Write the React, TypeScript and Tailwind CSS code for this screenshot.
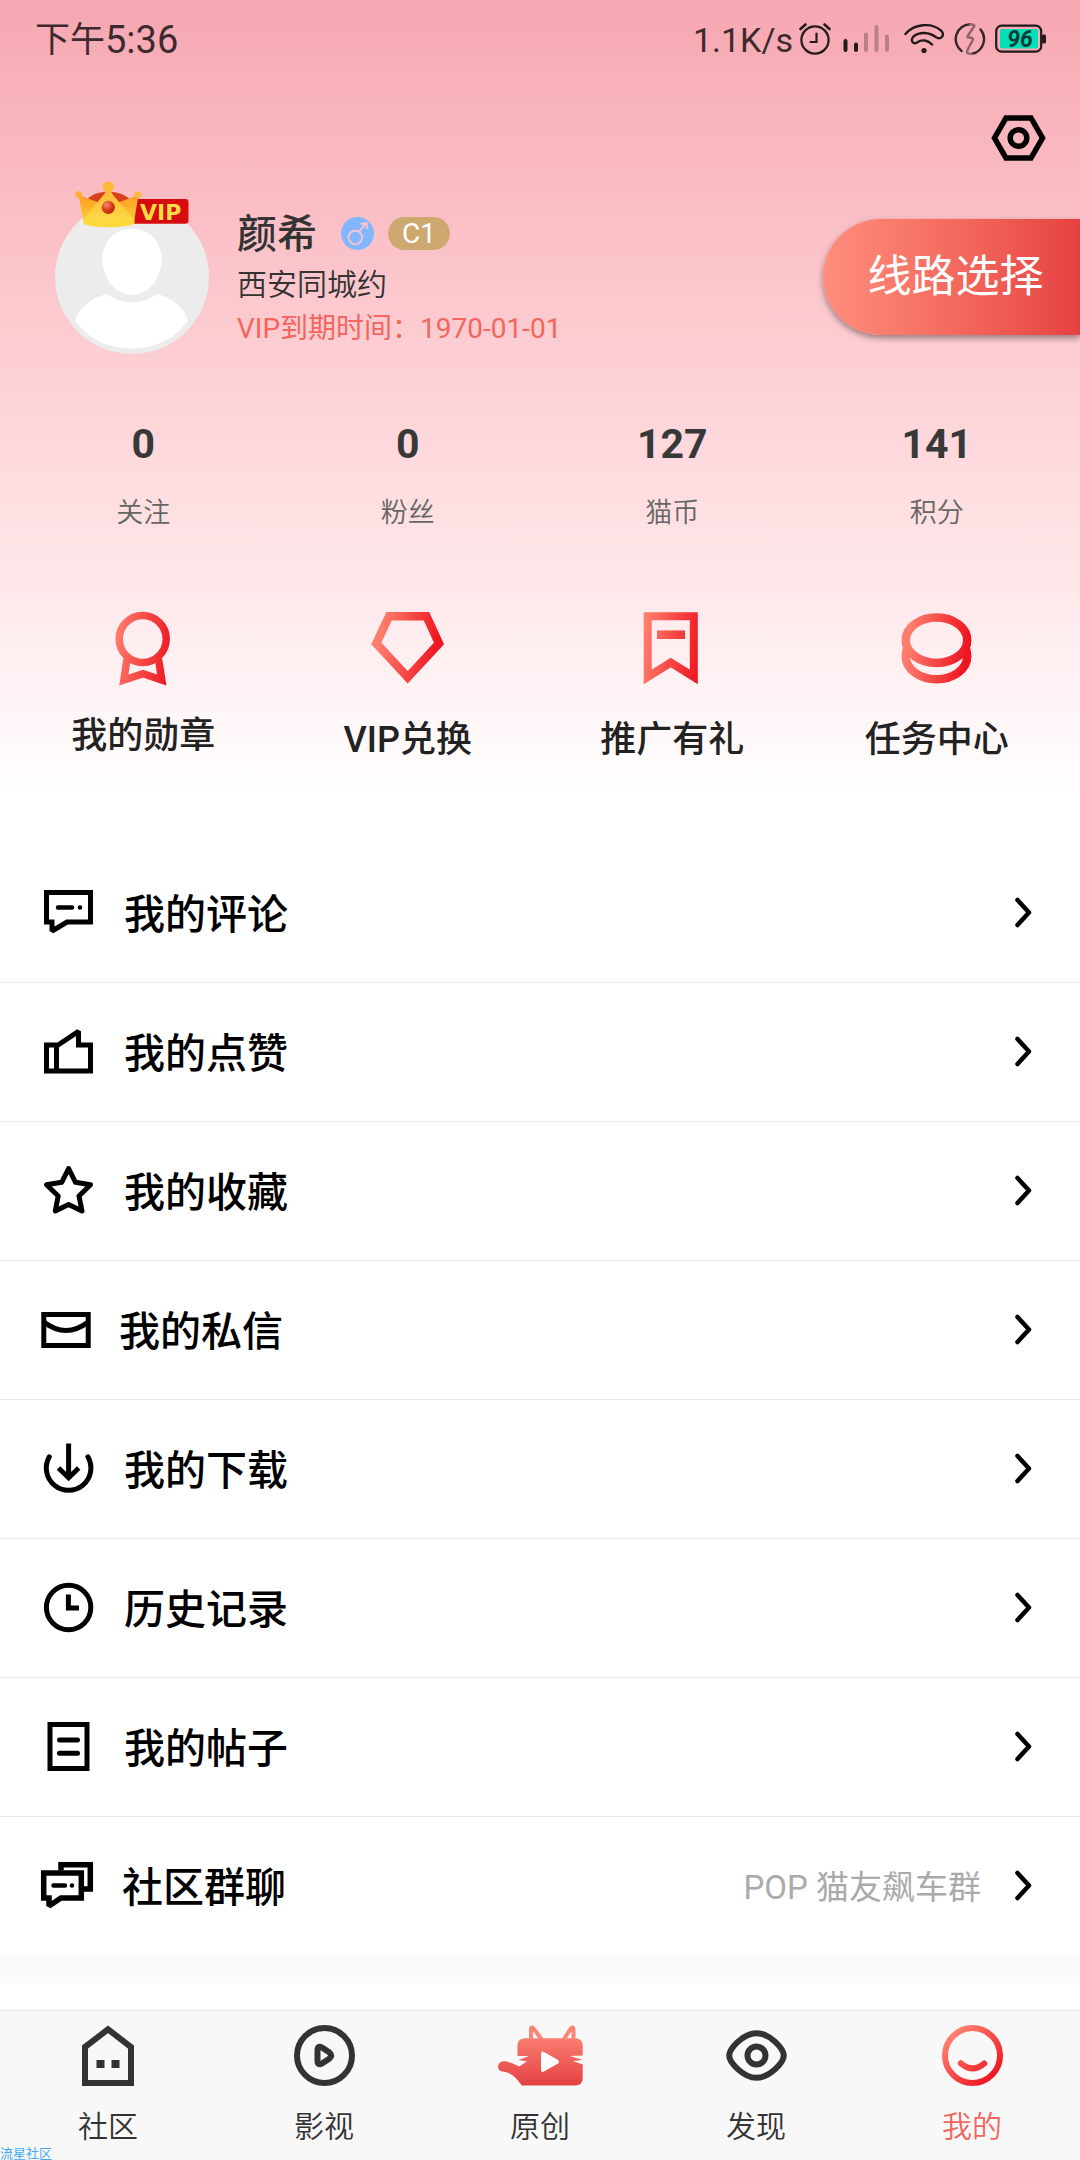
import type { ReactNode } from 'react';

type Row = { label: string; icon: ReactNode; note?: string };

function RedGradient({ id }: { id: string }) {
  return (
    <defs>
      <linearGradient id={id} gradientUnits="userSpaceOnUse" x1="8" y1="30" x2="66" y2="38">
        <stop offset="0" stopColor="#ff7d6d" />
        <stop offset="1" stopColor="#ee1721" />
      </linearGradient>
    </defs>
  );
}

function StatusBar() {
  return (
    <div className="flex h-[77px] items-start justify-between pt-[14px] pr-[33px] pl-[35px] leading-[50px] text-[#3d2a2e]">
      <div className="flex items-center text-[38px] leading-[50px]">
        <span className="pt-[2px] text-[35px]">下午</span>
        <span>5:36</span>
      </div>
      <div className="flex h-[50px] items-center text-[34px]">
        <span className="mr-[6px] pt-[2px] leading-[50px]">1.1K/s</span>
        <svg className="mr-[12px] h-[32px] w-[32px]" viewBox="0 0 32 32" fill="none" stroke="#231a1c" strokeWidth="2.2" strokeLinecap="round">
          <circle cx="16" cy="17" r="13.6" />
          <path d="M17.5 10.500V19H11.500" />
          <path d="M1.500 6L6.500 1.500M25.500 1.500L30.500 6" strokeWidth="2.600" />
        </svg>
        <svg className="mr-[15px] h-[32px] w-[46px]" viewBox="0 0 46 32" fill="none" strokeWidth="4" strokeLinecap="round">
          <path d="M2.500 18V27M13 21.500V27" stroke="#231a1c" />
          <path d="M23 11.500V27M33.500 4V27M44 13.500V27" stroke="#b98086" />
        </svg>
        <svg className="mr-[10px] h-[32px] w-[40px]" viewBox="0 0 40 32" fill="none" stroke="#231a1c" strokeWidth="2.400" strokeLinecap="round">
          <path d="M1.500 11C10 1 27 -1 37 7.500C41 11.500 38 17 32.500 14.500C25 9 16 8.500 9.500 13.500C6 17.500 9 22 13 19.500C18 16 24 17 28 21.500" />
          <circle cx="20" cy="27.500" r="2.600" fill="#231a1c" stroke="none" />
        </svg>
        <svg className="mr-[9px] h-[32px] w-[32px]" viewBox="0 0 32 32" fill="none" strokeWidth="2.400" strokeLinecap="round">
          <path d="M26.500 6.500A15 15 0 0 1 18 30.800M7.500 28A15 15 0 0 1 16 1.200" stroke="#33272a" />
          <path d="M16 1.200C19 1.200 21 2 20 3.500L14 12.500C13 14 13.500 14.500 15 14.500C19 14.500 19.500 15.500 18.500 17.500L14 26C12 30 13 31 18 30.800" stroke="#8f6369" />
        </svg>
        <svg className="h-[32px] w-[52px]" viewBox="0 0 52 32" aria-label="96">
          <rect x="1.200" y="2.700" width="45" height="26" rx="5.500" fill="none" stroke="#231a1c" strokeWidth="2.200" />
          <rect x="5" y="6" width="38" height="19.500" rx="2" fill="#00e0b8" />
          <rect x="47" y="11.500" width="4" height="9" rx="1.500" fill="#231a1c" />
          <text x="25" y="24" textAnchor="middle" fontSize="23" fontWeight="700" fontStyle="italic" fill="#0d3b34">96</text>
        </svg>
      </div>
    </div>
  );
}

function Avatar() {
  return (
    <div className="relative ml-[55px] h-[154px] w-[154px] shrink-0">
      <svg className="h-full w-full" viewBox="0 0 154 154">
        <circle cx="77" cy="77" r="77" fill="#ececec" />
        <path d="M77 29C95 29 106.500 41 106.500 59C106.500 80 93 94.700 77 94.700S47.500 80 47.500 59C47.500 41 59 29 77 29Z" fill="#fff" />
        <path d="M52 94Q77 111 102 94C118 98 131 110 133 121Q112 148.500 76.500 148.500Q41 148.500 20 121C22 110 36 98 52 94Z" fill="#fff" />
      </svg>
      <svg className="absolute -top-[19px] left-[19px] h-[47px] w-[116px]" viewBox="0 0 116 47">
        <defs>
          <linearGradient id="gold" x1="0" y1="0" x2="0" y2="1">
            <stop offset="0" stopColor="#fdb834" />
            <stop offset="1" stopColor="#ffe04a" />
          </linearGradient>
          <linearGradient id="amber" x1="0" y1="0" x2="0" y2="1">
            <stop offset="0" stopColor="#ff9d20" />
            <stop offset="1" stopColor="#ffcb38" />
          </linearGradient>
          <radialGradient id="gem" cx="0.35" cy="0.3" r="0.75">
            <stop offset="0" stopColor="#f58a66" />
            <stop offset="0.6" stopColor="#d93a1c" />
            <stop offset="1" stopColor="#c22610" />
          </radialGradient>
        </defs>
        <rect x="50" y="18" width="64.500" height="24.800" rx="3" fill="#d70c10" />
        <text x="66" y="38.500" fontSize="22" fontWeight="700" fontFamily="DejaVu Sans" fill="#fddb45">VIP</text>
        <path d="M13 19C20 8 48 8 56 19L50 30H18Z" fill="#d9401f" />
        <path d="M4.500 14L26 22L12 41L9 38Z" fill="url(#amber)" />
        <path d="M64.500 14L43 22L57 41L60.500 38Z" fill="url(#amber)" />
        <path d="M34.300 8Q37 10 39 14L58 36L60.500 42C56 47.500 14 47.500 9.500 42L11 36L29.500 14Q32 10 34.300 8Z" fill="url(#gold)" />
        <path d="M9 37C18 42.500 51 42.500 60.500 37L60.500 42C56 47.500 14 47.500 9.500 42Z" fill="#ffd83c" />
        <circle cx="34.300" cy="6" r="5.600" fill="#fdb835" />
        <circle cx="4.700" cy="13.500" r="3.300" fill="#fdb02c" />
        <circle cx="64" cy="13.500" r="3.300" fill="#fdb835" />
        <circle cx="34.300" cy="26.300" r="6.600" fill="url(#gem)" />
      </svg>
    </div>
  );
}

function Profile() {
  return (
    <section className="mt-[39px] flex items-center">
      <Avatar />
      <div className="ml-[28px] flex min-w-0 flex-1 flex-col pt-[2px]">
        <div className="flex h-[50px] items-center">
          <h1 className="pt-[4px] text-[40px] leading-[50px] font-medium text-[#333]">颜希</h1>
          <svg className="ml-[24px] h-[33px] w-[33px]" viewBox="0 0 33 33" fill="none" stroke="#f3c3d2" strokeWidth="2" aria-label="男">
            <circle cx="16.500" cy="16.500" r="16.500" fill="#82b6ff" stroke="none" />
            <circle cx="14.300" cy="20.500" r="6.800" />
            <path d="M18 14.500L25 6.500M19.500 7L25.500 6L26 12" />
          </svg>
          <span className="ml-[14px] rounded-full bg-[#cea96f] px-[14px] text-[28px] leading-[33px] text-white">C1</span>
        </div>
        <p className="mt-[2px] text-[30px] leading-[50px] font-[350] text-[#333]">西安同城约</p>
        <p className="text-[28px] leading-[38px] text-[#f2665c]">VIP到期时间：1970-01-01</p>
      </div>
      <button className="h-[116px] w-[257px] rounded-l-full bg-linear-to-r from-[#ff8e7c] to-[#e64141] pl-[8px] text-[44px] text-white shadow-[0_3px_6px_rgba(0,0,0,0.4)]">
        线路选择
      </button>
    </section>
  );
}

const stats = [
  ['0', '关注'],
  ['0', '粉丝'],
  ['127', '猫币'],
  ['141', '积分'],
];

const shortcuts: { label: string; icon: ReactNode }[] = [
  {
    label: '我的勋章',
    icon: (
      <svg className="h-[70px] w-[74px] overflow-visible" viewBox="0 0 74 70" fill="none" stroke="url(#medal)" strokeWidth="7.500">
        <RedGradient id="medal" />
        <circle cx="36.700" cy="27" r="23.500" />
        <path d="M21 47L17.800 68 37 61.800 55.800 68 52.500 47" />
      </svg>
    ),
  },
  {
    label: 'VIP兑换',
    icon: (
      <svg className="h-[74px] w-[74px]" viewBox="0 0 74 74" fill="none" stroke="url(#diamond)" strokeWidth="8.500">
        <RedGradient id="diamond" />
        <path d="M18 4.300H55.500L68 31.500 36.700 65.300 5.300 31.500Z" />
      </svg>
    ),
  },
  {
    label: '推广有礼',
    icon: (
      <svg className="h-[74px] w-[74px]" viewBox="0 0 74 74" fill="none" stroke="url(#ribbon)" strokeWidth="8">
        <RedGradient id="ribbon" />
        <path d="M12.700 4.300H58.800V65L35.700 50.500 12.700 65Z" />
        <path d="M22 18.400H50V27H22Z" fill="url(#ribbon)" stroke="none" />
      </svg>
    ),
  },
  {
    label: '任务中心',
    icon: (
      <svg className="h-[74px] w-[74px]" viewBox="0 0 74 74" fill="none" stroke="url(#coins)" strokeWidth="8.500">
        <RedGradient id="coins" />
        <ellipse cx="36.500" cy="28.200" rx="30.700" ry="22.700" />
        <path d="M7 37Q5.800 41 5.800 44.600A30.700 22.700 0 0 0 67.200 44.600Q67.200 41 66 37" />
      </svg>
    ),
  },
];

function LineIcon({ wide = 56, children }: { wide?: number; children: ReactNode }) {
  return (
    <svg width={wide} height="56" viewBox={`0 0 ${wide} 56`} fill="none" stroke="#000" strokeWidth="5" className="shrink-0">
      {children}
    </svg>
  );
}

const rows: Row[] = [
  {
    label: '我的评论',
    icon: (
      <LineIcon>
        <path d="M6.500 7.500H50.500V37H27L12 46V37H6.500Z" strokeMiterlimit="1.500" />
        <path d="M18 22.500H32M39.900 22.500H40" strokeLinecap="round" strokeWidth="4.500" />
      </LineIcon>
    ),
  },
  {
    label: '我的点赞',
    icon: (
      <LineIcon>
        <path d="M6.500 21H18L38.500 7.300V21H50.500V47H6.500ZM16.500 21V47" strokeMiterlimit="1.500" />
      </LineIcon>
    ),
  },
  {
    label: '我的收藏',
    icon: (
      <LineIcon>
        <path d="M28.600 5.500L35.500 19.300 50.500 21.700 39 33 42 48 28.600 41.500 15.300 48 18.200 33 6.500 21.700 21.700 19.300Z" strokeLinejoin="round" />
      </LineIcon>
    ),
  },
  {
    label: '我的私信',
    icon: (
      <LineIcon wide={51}>
        <path d="M3.800 12.500H48.200V43.500H3.800Z" />
        <path d="M3.800 20Q26 37 48.200 20" />
      </LineIcon>
    ),
  },
  {
    label: '我的下载',
    icon: (
      <LineIcon>
        <path d="M28.600 2.500V37M18.500 27L28.600 36.800 38.700 27" />
        <path d="M9.300 15.800A22.300 22.300 0 1 0 47.900 15.800" strokeLinecap="round" />
      </LineIcon>
    ),
  },
  {
    label: '历史记录',
    icon: (
      <LineIcon>
        <circle cx="28.600" cy="27.500" r="22.200" />
        <path d="M28.400 14.500V28H39" />
      </LineIcon>
    ),
  },
  {
    label: '我的帖子',
    icon: (
      <LineIcon>
        <path d="M10 5.500H47V49.500H10Z" />
        <path d="M19.500 21H37.500M19.500 34.300H37.500" strokeLinecap="round" />
      </LineIcon>
    ),
  },
  {
    label: '社区群聊',
    note: 'POP 猫友飙车群',
    icon: (
      <LineIcon wide={54}>
        <path d="M3.700 15H41.300V40H21L9 48V40H3.700Z" strokeMiterlimit="1.500" strokeWidth="5.500" />
        <path d="M21 12.500V6.700H50.300V31H43" strokeWidth="5.500" />
        <path d="M13.500 27.500H25M31.900 27.500H32" strokeLinecap="round" strokeWidth="4.500" />
      </LineIcon>
    ),
  },
];

function MenuRow({ label, icon, note }: Row) {
  return (
    <li>
      <a href="#" className="flex h-[138px] items-center pr-[48px] pl-[40px]">
        {icon}
        <span className="ml-[28px] flex-1 pt-[4px] text-[41px] leading-[56px] font-medium text-black">{label}</span>
        {note && <span className="mr-[33px] pt-[4px] text-[33px] leading-[48px] text-[#aaa]">{note}</span>}
        <svg className="h-[32px] w-[18px]" viewBox="0 0 18 32" fill="none" stroke="#000" strokeWidth="4.500" strokeLinecap="round" strokeLinejoin="round">
          <path d="M3.500 3L15 15.500 3.500 28" />
        </svg>
      </a>
    </li>
  );
}

const tabs: { label: string; icon: ReactNode }[] = [
  {
    label: '社区',
    icon: (
      <svg className="h-[61px] w-[52px]" viewBox="0 0 52 61" fill="none" stroke="#333" strokeWidth="6">
        <path d="M3 22L26 4.300 49 22V58H3Z" />
        <path d="M14.500 35H22.500V43H14.500ZM29.500 35H37.500V43H29.500Z" fill="#333" stroke="none" />
      </svg>
    ),
  },
  {
    label: '影视',
    icon: (
      <svg className="h-[61px] w-[61px]" viewBox="0 0 61 61" fill="none" stroke="#333" strokeWidth="6" strokeLinejoin="round">
        <circle cx="30.500" cy="30.500" r="27.500" />
        <path d="M23.500 25.500Q23.500 20 28 22.500L35.500 27.500Q38.500 30.500 35.500 33.500L28 38.500Q23.500 41 23.500 35.500Z" />
      </svg>
    ),
  },
  {
    label: '原创',
    icon: (
      <svg className="h-[61px] w-[85px]" viewBox="0 0 85 61">
        <defs>
          <linearGradient id="cat" gradientUnits="userSpaceOnUse" x1="0" y1="0" x2="0" y2="61">
            <stop offset="0" stopColor="#ff8f7d" />
            <stop offset="1" stopColor="#e43f42" />
          </linearGradient>
        </defs>
        <path d="M27 13.300H77Q84.700 13.300 84.700 21V30.500L72 31 84.700 35 75 36 84.700 39.500V53Q84.700 60.500 77 60.500H24C20 56 15 47 4 46.500C-1.500 45 -1 38 4 36.500C10 35.500 15 39 21 41.500L29 36.500 20.500 35 31 31 19.500 31V21Q19.500 13.300 27 13.300Z" fill="url(#cat)" />
        <path d="M33 15V4Q33.500 1 36 4L44 15M65.500 15L72.500 4Q75 1 75.500 4V15" fill="none" stroke="#fb8474" strokeWidth="4" />
        <path d="M43 29Q43 25.500 46 27L60 35Q62 36.800 60 38.500L46 46.500Q43 48 43 44.500Z" fill="#fff" />
      </svg>
    ),
  },
  {
    label: '发现',
    icon: (
      <svg className="h-[61px] w-[61px]" viewBox="0 0 61 61" fill="none" stroke="#333" strokeWidth="6">
        <path d="M3.200 30.500C3.200 24 17 8.200 30.500 8.200S57.800 24 57.800 30.500 44 52.800 30.500 52.800 3.200 37 3.200 30.500Z" />
        <circle cx="30.500" cy="30.500" r="9" />
      </svg>
    ),
  },
  {
    label: '我的',
    icon: (
      <svg className="h-[61px] w-[61px]" viewBox="0 0 61 61" fill="none" stroke="url(#smile)" strokeWidth="6" strokeLinecap="round">
        <defs>
          <linearGradient id="smile" gradientUnits="userSpaceOnUse" x1="10" y1="8" x2="52" y2="52">
            <stop offset="0" stopColor="#ff8270" />
            <stop offset="1" stopColor="#ee1721" />
          </linearGradient>
        </defs>
        <circle cx="30.500" cy="30.500" r="27.500" />
        <path d="M18.800 38.200Q30.500 48.500 42.200 38.500" />
      </svg>
    ),
  },
];

export default function App() {
  return (
    <div className="relative min-h-screen w-full bg-white [font-family:Roboto,'Noto_Sans_CJK_SC',sans-serif]">
      <header className="bg-linear-to-b from-[#f6a7b1] to-white pb-[38px]">
        <StatusBar />
        <div className="flex justify-end pt-[38px] pr-[33px]">
          <button aria-label="设置">
            <svg className="h-[46px] w-[56px]" viewBox="0 0 56 46" fill="none" stroke="#000" strokeWidth="5.500">
              <path d="M15 3H40L51.500 23 40 43H15L3.500 23Z" />
              <circle cx="27.500" cy="23" r="8.300" />
            </svg>
          </button>
        </div>
        <Profile />
        <dl className="grid grid-cols-4 px-[11px] pt-[66px] text-center">
          {stats.map(([value, label]) => (
            <div key={label} className="flex flex-col-reverse">
              <dt className="mt-[25px] text-[27px] leading-[40px] font-[350] text-[#666]">{label}</dt>
              <dd className="text-[41px] leading-[48px] font-bold text-[#383838]">{value}</dd>
            </div>
          ))}
        </dl>
        <nav className="mt-[79px] grid grid-cols-4 px-[11px]">
          {shortcuts.map((s) => (
            <a key={s.label} href="#" className="flex flex-col items-center">
              {s.icon}
              <span className="mt-[32px] text-[36px] leading-[44px] font-medium text-[#222]">{s.label}</span>
            </a>
          ))}
        </nav>
      </header>
      <main className="pt-[44px]">
        <ul className="divide-y divide-[#ebebeb]">
          {rows.map((r) => (
            <MenuRow key={r.label} {...r} />
          ))}
        </ul>
        <div className="h-[28px] bg-[#fafafa]" />
      </main>
      <nav className="mt-[27px] grid grid-cols-5 border-t border-[#e8e8e8] bg-[#f8f8f8] pt-[14px] pb-[15px]">
        {tabs.map((t) => (
          <a key={t.label} href="#" className="flex flex-col items-center">
            {t.icon}
            <span className={t.label === '我的' ? 'mt-[23px] text-[30px] leading-[36px] font-[350] text-[#f2665c]' : 'mt-[23px] text-[30px] leading-[36px] font-[350] text-[#333]'}>
              {t.label}
            </span>
          </a>
        ))}
      </nav>
      <span className="absolute bottom-0 left-0 text-[13px] leading-[13px] text-[#45a8f5]">流星社区</span>
    </div>
  );
}
